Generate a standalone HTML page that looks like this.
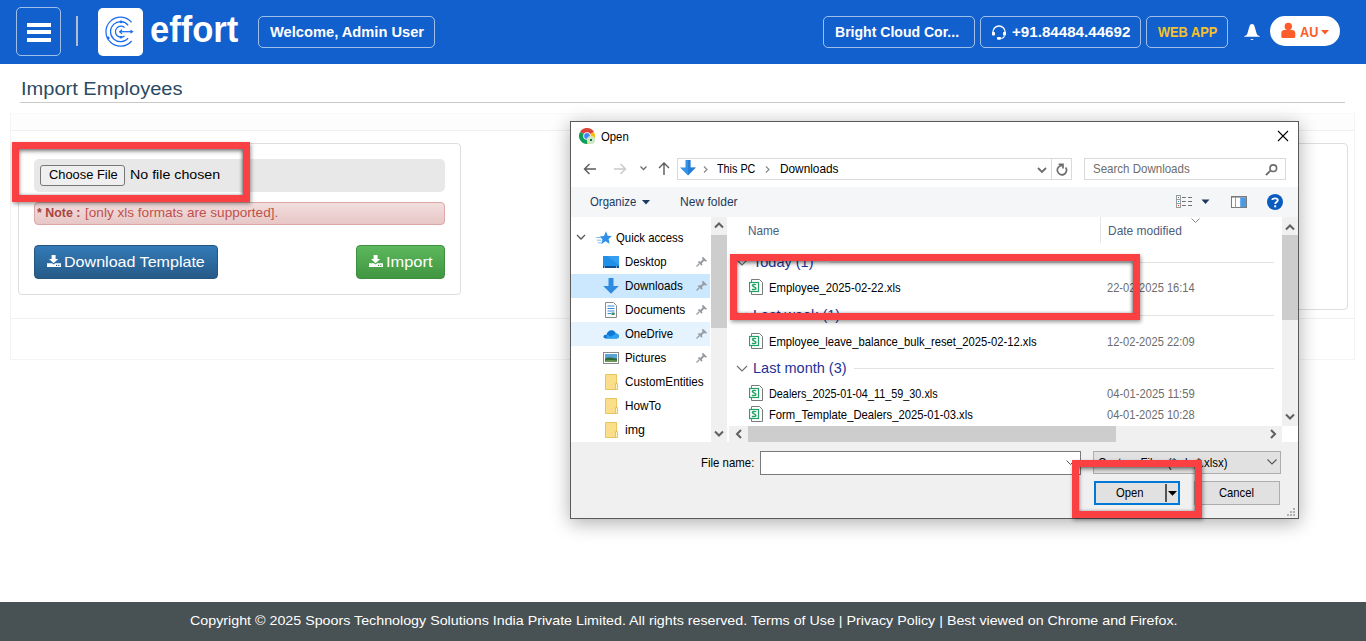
<!DOCTYPE html>
<html><head><meta charset="utf-8">
<style>
*{box-sizing:border-box;margin:0;padding:0}
html,body{width:1366px;height:641px;overflow:hidden;background:#fff;font-family:"Liberation Sans",sans-serif;position:relative}
.a{position:absolute}
.t{position:absolute;white-space:nowrap}
.hb{border:1px solid rgba(255,255,255,.55);border-radius:5px}
</style></head><body>
<div class="a" style="left:0px;top:0px;width:1366px;height:64px;background:#1160cd"></div>
<div class="a" style="left:16px;top:7px;width:45px;height:49px;border:1px solid rgba(255,255,255,.6);border-radius:5px"></div>
<div class="a" style="left:27px;top:23px;width:24px;height:4px;background:#fff"></div>
<div class="a" style="left:27px;top:30px;width:24px;height:4px;background:#fff"></div>
<div class="a" style="left:27px;top:38px;width:24px;height:4px;background:#fff"></div>
<div class="a" style="left:76px;top:16px;width:2px;height:30px;background:#b4bdcc"></div>
<div class="a" style="left:98px;top:8px;width:45px;height:48px;background:#fff;border-radius:5px"></div>
<svg class="a" style="left:98px;top:8px" width="45" height="48" viewBox="0 0 45 48"><g fill="none" stroke="#1a6cf0" stroke-width="1.25">
<path d="M33.6 14.4 A14.5 14.5 0 1 0 33.6 33"/><path d="M30.2 17.3 A10 10 0 1 0 30.2 30.1"/><path d="M26.5 19.5 A5.5 5.5 0 1 0 26.5 27.9"/><path d="M21.5 23.7 H34"/><path d="M24 21.7 L21.8 23.7 L24 25.7"/></g>
<g fill="#1a6cf0"><circle cx="23" cy="13.9" r="1.3"/><circle cx="23" cy="29.2" r="1.3"/><circle cx="10.2" cy="30" r="1.4"/><path d="M32.5 21.6 L35.5 23.7 L32.5 25.8Z"/></g></svg>
<div class="t" style="left:149.70px;top:11.53px;font-size:36px;line-height:36px;color:#fff;font-weight:bold;transform:scaleX(0.9600);transform-origin:0 0;">effort</div>
<div class="a" style="left:258px;top:16px;width:177px;height:32px;border:1px solid rgba(255,255,255,.6);border-radius:5px"></div>
<div class="t" style="left:269.80px;top:24.76px;font-size:14.7px;line-height:14.7px;color:#fff;font-weight:bold;transform:scaleX(0.9987);transform-origin:0 0;">Welcome, Admin User</div>
<div class="a" style="left:823px;top:16px;width:152px;height:32px;border:1px solid rgba(255,255,255,.6);border-radius:5px"></div>
<div class="t" style="left:834.80px;top:24.86px;font-size:14.7px;line-height:14.7px;color:#fff;font-weight:bold;transform:scaleX(0.9565);transform-origin:0 0;">Bright Cloud Cor...</div>
<div class="a" style="left:980px;top:16px;width:161px;height:32px;border:1px solid rgba(255,255,255,.6);border-radius:5px"></div>
<svg class="a" style="left:991px;top:25px" width="16" height="16" viewBox="0 0 16 16"><path d="M1.9 9 V7.1 A6.1 6.1 0 0 1 14.1 7.1 V9" fill="none" stroke="#fff" stroke-width="1.3"/>
<rect x="1" y="7" width="3" height="3.6" rx=".8" fill="#fff"/><rect x="12" y="7" width="3" height="3.6" rx=".8" fill="#fff"/>
<path d="M13.3 10.4 Q13.3 13.3 9.5 13.3" fill="none" stroke="#fff" stroke-width="1.1"/><rect x="6" y="12" width="4" height="2.7" rx="1" fill="#fff"/></svg>
<div class="t" style="left:1011.90px;top:24.86px;font-size:14.7px;line-height:14.7px;color:#fff;font-weight:bold;transform:scaleX(1.0316);transform-origin:0 0;">+91.84484.44692</div>
<div class="a" style="left:1146px;top:16px;width:82px;height:32px;border:1px solid rgba(255,255,255,.6);border-radius:5px"></div>
<div class="t" style="left:1157.80px;top:25.20px;font-size:14.3px;line-height:14.3px;color:#f6c12a;font-weight:bold;transform:scaleX(0.8941);transform-origin:0 0;">WEB APP</div>
<svg class="a" style="left:1243px;top:23px" width="18" height="19" viewBox="0 0 18 19"><path d="M9 1 C7.6 1 7 1.8 6.5 3.2 L4.3 10.8 C3.8 12.2 2.6 12.8 1.2 13.2 V13.8 H16.8 V13.2 C15.4 12.8 14.2 12.2 13.7 10.8 L11.5 3.2 C11 1.8 10.4 1 9 1Z" fill="#fff"/><path d="M7.3 16 Q9 18.2 10.7 16Z" fill="#fff"/></svg>
<div class="a" style="left:1270px;top:16px;width:70px;height:30px;background:#fff;border-radius:15px"></div>
<svg class="a" style="left:1281px;top:22px" width="15" height="16" viewBox="0 0 15 16"><circle cx="7.3" cy="4.5" r="3.7" fill="#fd5c2b"/><path d="M0.3 14.4 V11 C0.3 9 1.8 7.9 3.6 7.9 H11 C12.8 7.9 14.3 9 14.3 11 V14.4 C14.3 15.3 13.8 15.9 12.8 15.9 H1.8 C0.8 15.9 0.3 15.3 0.3 14.4Z" fill="#fd5c2b"/></svg>
<div class="t" style="left:1299.70px;top:25.15px;font-size:14px;line-height:14px;color:#fd5c2b;font-weight:bold;transform:scaleX(0.9052);transform-origin:0 0;">AU</div>
<svg class="a" style="left:1321px;top:30px" width="8" height="5" viewBox="0 0 8 5"><path d="M0 0H8L4 4.5Z" fill="#fd5c2b"/></svg>
<div class="t" style="left:20.50px;top:79.96px;font-size:18px;line-height:18px;color:#2b4a63;font-weight:normal;transform:scaleX(1.1133);transform-origin:0 0;">Import Employees</div>
<div class="a" style="left:20px;top:102px;width:1325px;height:1px;background:#c9c9c9"></div>
<div class="a" style="left:10px;top:113px;width:1345px;height:247px;border:1px solid #f4f4f4;border-top-color:#fafafa"></div>
<div class="a" style="left:11px;top:114px;width:1343px;height:16px;background:#fdfdfd"></div>
<div class="a" style="left:10px;top:130px;width:1345px;height:1px;background:#f0f0f0"></div>
<div class="a" style="left:10px;top:318px;width:1345px;height:1px;background:#f0f0f0"></div>
<div class="a" style="left:18px;top:143px;width:443px;height:152px;border:1px solid #dedede;border-radius:4px"></div>
<div class="a" style="left:34px;top:159px;width:411px;height:33px;background:#e8e8e8;border-radius:5px"></div>
<div class="a" style="left:40px;top:165px;width:85px;height:21px;background:#efefef;border:1px solid #767676;border-radius:3px"></div>
<div class="t" style="left:48.60px;top:168.39px;font-size:13.6px;line-height:13.6px;color:#000;font-weight:normal;transform:scaleX(0.9467);transform-origin:0 0;">Choose File</div>
<div class="t" style="left:129.80px;top:168.29px;font-size:13.6px;line-height:13.6px;color:#000;font-weight:normal;transform:scaleX(1.0466);transform-origin:0 0;">No file chosen</div>
<div class="a" style="left:34px;top:202px;width:411px;height:23px;background:linear-gradient(#f2dede,#e8c6c6);border:1px solid #dca7a7;border-radius:4px"></div>
<div class="t" style="left:37.10px;top:207.42px;font-size:12.5px;line-height:12.5px;color:#a94442;font-weight:bold;transform:scaleX(0.9943);transform-origin:0 0;">* Note :</div>
<div class="t" style="left:84.70px;top:207.16px;font-size:12.8px;line-height:12.8px;color:#c0504d;font-weight:normal;transform:scaleX(1.0613);transform-origin:0 0;">[only xls formats are supported].</div>
<div class="a" style="left:34px;top:245px;width:184px;height:34px;background:linear-gradient(#337ab7,#265a88);border:1px solid #245580;border-radius:4px"></div>
<div class="t" style="left:64.20px;top:254.73px;font-size:14.5px;line-height:14.5px;color:#fff;font-weight:normal;transform:scaleX(1.1079);transform-origin:0 0;">Download Template</div>
<svg class="a" style="left:47px;top:255px" width="14" height="12" viewBox="0 0 14 12"><path d="M4.6 0 H8.6 V4 H11.2 L6.6 8.3 L2 4 H4.6Z" fill="#fff"/><path d="M0 8.2 H5 L6.6 9.6 L8.2 8.2 H14 V12 H0Z" fill="#fff"/><rect x="9" y="9.8" width="1.2" height="1.2" fill="#2b6499"/><rect x="11.2" y="9.8" width="1.2" height="1.2" fill="#2b6499"/></svg>
<div class="a" style="left:356px;top:245px;width:89px;height:34px;background:linear-gradient(#5cb85c,#419641);border:1px solid #3e8f3e;border-radius:4px"></div>
<div class="t" style="left:386.00px;top:254.73px;font-size:14.5px;line-height:14.5px;color:#fff;font-weight:normal;transform:scaleX(1.1316);transform-origin:0 0;">Import</div>
<svg class="a" style="left:369px;top:255px" width="14" height="12" viewBox="0 0 14 12"><path d="M4.6 0 H8.6 V4 H11.2 L6.6 8.3 L2 4 H4.6Z" fill="#fff"/><path d="M0 8.2 H5 L6.6 9.6 L8.2 8.2 H14 V12 H0Z" fill="#fff"/><rect x="9" y="9.8" width="1.2" height="1.2" fill="#4a9e4a"/><rect x="11.2" y="9.8" width="1.2" height="1.2" fill="#4a9e4a"/></svg>
<div class="a" style="left:900px;top:143px;width:448px;height:167px;border:1px solid #dedede;border-radius:4px"></div>
<div class="a" style="left:0px;top:602px;width:1366px;height:39px;background:#485154"></div>
<div class="t" style="left:189.50px;top:613.97px;font-size:13.5px;line-height:13.5px;color:#fff;font-weight:normal;transform:scaleX(1.0563);transform-origin:0 0;">Copyright © 2025 Spoors Technology Solutions India Private Limited. All rights reserved. Terms of Use | Privacy Policy | Best viewed on Chrome and Firefox.</div>
<div class="a" style="left:12px;top:142px;width:238px;height:60px;border:7px solid #fb4044;box-shadow:1px 2px 4px rgba(0,0,0,.4), inset 0 2px 4px rgba(0,0,0,.5), inset -1px 0 3px rgba(0,0,0,.25)"></div>
<div class="a" style="left:570px;top:121px;width:729px;height:398px;background:#f0f0f0;border:1px solid #5a5a5a;box-shadow:0 4px 18px rgba(0,0,0,.32)"></div>
<div class="a" style="left:571px;top:122px;width:727px;height:65px;background:#fff"></div>
<div class="a" style="left:571px;top:187px;width:727px;height:30px;background:#f5f6f7"></div>
<div class="a" style="left:571px;top:217px;width:140px;height:225px;background:#fff"></div>
<div class="a" style="left:711px;top:217px;width:16px;height:225px;background:#f0f0f0"></div>
<div class="a" style="left:727px;top:217px;width:2px;height:225px;background:#fff"></div>
<div class="a" style="left:729px;top:217px;width:553px;height:209px;background:#fff"></div>
<div class="a" style="left:1282px;top:217px;width:16px;height:209px;background:#f0f0f0"></div>
<div class="a" style="left:729px;top:426px;width:553px;height:16px;background:#f0f0f0"></div>
<div class="a" style="left:1282px;top:426px;width:16px;height:16px;background:#fff"></div>
<svg class="a" style="left:579px;top:128px" width="16" height="16" viewBox="0 0 16 16"><path d="M8 8 L1.07 4 A8 8 0 0 1 14.93 4Z" fill="#db4437"/><path d="M8 8 L14.93 4 A8 8 0 0 1 8 16Z" fill="#f4c20d"/><path d="M8 8 L8 16 A8 8 0 0 1 1.07 4Z" fill="#0f9d58"/>
<circle cx="8" cy="8" r="3.8" fill="#fff"/><circle cx="8" cy="8" r="2.9" fill="#4285f4"/>
<circle cx="12" cy="12" r="4.1" fill="#cfe8c8"/><rect x="11" y="11" width="2" height="2" fill="#137333"/></svg>
<div class="t" style="left:600.80px;top:131.02px;font-size:12.5px;line-height:12.5px;color:#000;font-weight:normal;transform:scaleX(0.9060);transform-origin:0 0;">Open</div>
<svg class="a" style="left:1277px;top:130px" width="12" height="12" viewBox="0 0 12 12"><path d="M1 1 L11 11 M11 1 L1 11" stroke="#000" stroke-width="1.1"/></svg>
<svg class="a" style="left:583px;top:162px" width="14" height="14" viewBox="0 0 14 14"><path d="M1.5 7 H13 M6.5 2 L1.5 7 L6.5 12" fill="none" stroke="#5a5a5a" stroke-width="1.4"/></svg>
<svg class="a" style="left:613px;top:162px" width="14" height="14" viewBox="0 0 14 14"><path d="M1 7 H12.5 M7.5 2 L12.5 7 L7.5 12" fill="none" stroke="#c9c9c9" stroke-width="1.4"/></svg>
<svg class="a" style="left:639px;top:165px" width="9" height="7" viewBox="0 0 9 7"><path d="M1.5 1.5 L4.5 4.5 L7.5 1.5" fill="none" stroke="#6d6d6d" stroke-width="1.3"/></svg>
<svg class="a" style="left:657px;top:161px" width="14" height="15" viewBox="0 0 14 15"><path d="M7 14 V2 M2 7 L7 2 L12 7" fill="none" stroke="#5a5a5a" stroke-width="1.4"/></svg>
<div class="a" style="left:677px;top:158px;width:395px;height:22px;background:#fff;border:1px solid #d9d9d9"></div>
<div class="a" style="left:1051px;top:158px;width:1px;height:22px;background:#d9d9d9"></div>
<svg class="a" style="left:680px;top:160px" width="16" height="16" viewBox="0 0 16 16"><path d="M5.5 0 H10.5 V7.5 H16 L8 15.5 L0 7.5 H5.5Z" fill="#3592e6"/><path d="M8 15.5 L15.5 7.5 H10.5 V0 H8Z" fill="#1f72c8" opacity=".6"/></svg>
<svg class="a" style="left:702px;top:165px" width="7" height="9" viewBox="0 0 7 9"><path d="M2 1.5 L5 4.5 L2 7.5" fill="none" stroke="#8a8a8a" stroke-width="1.2"/></svg>
<div class="t" style="left:717.40px;top:162.67px;font-size:12.2px;line-height:12.2px;color:#000;font-weight:normal;transform:scaleX(0.8851);transform-origin:0 0;">This PC</div>
<svg class="a" style="left:764px;top:165px" width="7" height="9" viewBox="0 0 7 9"><path d="M2 1.5 L5 4.5 L2 7.5" fill="none" stroke="#8a8a8a" stroke-width="1.2"/></svg>
<div class="t" style="left:779.50px;top:162.67px;font-size:12.2px;line-height:12.2px;color:#000;font-weight:normal;transform:scaleX(0.9693);transform-origin:0 0;">Downloads</div>
<svg class="a" style="left:1037px;top:167px" width="10" height="7" viewBox="0 0 10 7"><path d="M1 1 L5 5 L9 1" fill="none" stroke="#6d6d6d" stroke-width="1.8"/></svg>
<svg class="a" style="left:1056px;top:162px" width="12" height="14" viewBox="0 0 12 14"><path d="M6 3.6 A4.6 4.6 0 1 0 9.6 5.4" fill="none" stroke="#6d6d6d" stroke-width="1.7"/><path d="M2.6 2.4 H7 V6.6" fill="none" stroke="#6d6d6d" stroke-width="1.7"/></svg>
<div class="a" style="left:1084px;top:158px;width:202px;height:22px;background:#fff;border:1px solid #d9d9d9"></div>
<div class="t" style="left:1093.20px;top:162.67px;font-size:12.2px;line-height:12.2px;color:#6d6d6d;font-weight:normal;transform:scaleX(0.9452);transform-origin:0 0;">Search Downloads</div>
<svg class="a" style="left:1265px;top:163px" width="13" height="13" viewBox="0 0 13 13"><circle cx="8.3" cy="5.2" r="3.3" fill="none" stroke="#6a6a6a" stroke-width="1.6"/><path d="M5.2 7.8 L1 12" stroke="#6a6a6a" stroke-width="1.8"/></svg>
<div class="t" style="left:589.70px;top:196.47px;font-size:12.2px;line-height:12.2px;color:#1e395b;font-weight:normal;transform:scaleX(0.9352);transform-origin:0 0;">Organize</div>
<svg class="a" style="left:642px;top:200px" width="8" height="5" viewBox="0 0 8 5"><path d="M0 0 H8 L4 4.5Z" fill="#1e395b"/></svg>
<div class="t" style="left:680.30px;top:196.47px;font-size:12.2px;line-height:12.2px;color:#1e395b;font-weight:normal;transform:scaleX(0.9894);transform-origin:0 0;">New folder</div>
<svg class="a" style="left:1176px;top:195px" width="17" height="13" viewBox="0 0 17 13"><rect x="0.5" y="0.5" width="4" height="12" fill="#fff" stroke="#9a9a9a"/><path d="M0.5 4.5 H4.5 M0.5 8.5 H4.5" stroke="#9a9a9a"/>
<rect x="2" y="2" width="1" height="1" fill="#2e8b57"/><rect x="2" y="6" width="1" height="1" fill="#3a8ee6"/><rect x="2" y="10" width="1" height="1" fill="#e03030"/>
<path d="M6 2.5 H9.8 M12 2.5 H16 M6 6.5 H9.8 M12 6.5 H16 M6 10.5 H9.8 M12 10.5 H16" stroke="#707070" stroke-width="1"/></svg>
<svg class="a" style="left:1201px;top:199px" width="9" height="6" viewBox="0 0 9 6"><path d="M0.5 0.5 H8.5 L4.5 5Z" fill="#1e395b"/></svg>
<svg class="a" style="left:1231px;top:196px" width="16" height="12" viewBox="0 0 16 12"><rect x="0.5" y="0.5" width="15" height="11" fill="#fff" stroke="#7a7a7a"/><rect x="0" y="0" width="16" height="1.6" fill="#7a7a7a"/><rect x="9.2" y="1.6" width="5.8" height="9.4" fill="#4a9be6"/><path d="M4.5 1 V11.5" stroke="#9a9a9a"/></svg>
<svg class="a" style="left:1266px;top:193px" width="18" height="18" viewBox="0 0 18 18"><circle cx="9" cy="9" r="8" fill="#0b5cc1"/><path d="M6.3 7 C6.3 4.8 11.8 4.8 11.8 7.2 C11.8 9 9.2 9 9.2 11" fill="none" stroke="#fff" stroke-width="1.8"/><rect x="8.2" y="12.3" width="2" height="2" fill="#fff"/></svg>
<div class="a" style="left:571px;top:274px;width:139px;height:24px;background:#cce8ff"></div>
<div class="a" style="left:571px;top:322px;width:139px;height:24px;background:#e5f3ff"></div>
<svg class="a" style="left:576px;top:234px" width="10" height="7" viewBox="0 0 10 7"><path d="M1 1 L5 5 L9 1" fill="none" stroke="#555" stroke-width="1.3"/></svg>
<svg class="a" style="left:596px;top:231px" width="16" height="14" viewBox="0 0 16 14"><path d="M10 0.3 L11.7 4.8 L15.8 5 L12.6 7.9 L13.6 12.8 L9.4 10.2 L5.2 13.2 L6.5 8.4 L3.6 5.4 L8 5.1Z" fill="#2f8fe6"/>
<path d="M0.3 6.5 H4.5 M0.8 9.2 H5.3 M1.8 11.8 H5" stroke="#7bbcf2" stroke-width="1"/></svg>
<div class="t" style="left:616.20px;top:232.07px;font-size:12.2px;line-height:12.2px;color:#000;font-weight:normal;transform:scaleX(0.9305);transform-origin:0 0;">Quick access</div>
<svg class="a" style="left:603px;top:256px" width="16" height="12" viewBox="0 0 16 12"><rect x="0" y="0" width="16" height="12" fill="#1f8fe8"/><path d="M0 0 H16 V9 L4 0Z" fill="#46a9f5" opacity=".6"/><rect x="0" y="10" width="16" height="2" fill="#0b4f94"/><rect x="1" y="10.5" width="1" height="1" fill="#fff"/><rect x="13" y="10.5" width="1" height="1" fill="#fff"/></svg>
<div class="t" style="left:624.70px;top:256.07px;font-size:12.2px;line-height:12.2px;color:#000;font-weight:normal;transform:scaleX(0.9296);transform-origin:0 0;">Desktop</div>
<svg class="a" style="left:696px;top:256px" width="12" height="11" viewBox="0 0 12 11"><path d="M7 0.8 L11.2 5 L9.8 5.6 L8 5 L6 7 L6.4 9 L5.6 9.8 L1.8 6 L2.6 5.2 L4.6 5.6 L6.6 3.6 L6 1.8Z" fill="#979ca1"/><path d="M3.5 7.5 L0.5 10.5" stroke="#979ca1" stroke-width="1.3"/></svg>
<svg class="a" style="left:603px;top:278px" width="16" height="16" viewBox="0 0 16 16"><path d="M5.5 0 H10.5 V8 H15.8 L8 15.8 L0.2 8 H5.5Z" fill="#2e8be0"/></svg>
<div class="t" style="left:624.70px;top:280.07px;font-size:12.2px;line-height:12.2px;color:#000;font-weight:normal;transform:scaleX(0.9593);transform-origin:0 0;">Downloads</div>
<svg class="a" style="left:696px;top:280px" width="12" height="11" viewBox="0 0 12 11"><path d="M7 0.8 L11.2 5 L9.8 5.6 L8 5 L6 7 L6.4 9 L5.6 9.8 L1.8 6 L2.6 5.2 L4.6 5.6 L6.6 3.6 L6 1.8Z" fill="#979ca1"/><path d="M3.5 7.5 L0.5 10.5" stroke="#979ca1" stroke-width="1.3"/></svg>
<svg class="a" style="left:605px;top:302px" width="12" height="16" viewBox="0 0 12 16"><path d="M0.5 0.5 H8.5 L11.5 3.5 V15.5 H0.5Z" fill="#fff" stroke="#8a8a8a"/><path d="M2.5 4 H9.5 M2.5 6.5 H9.5 M2.5 9 H9.5 M2.5 11.5 H6 M7 11.5 H9.5" stroke="#3a88d8" stroke-width="1"/><rect x="6.5" y="10.5" width="3" height="2.5" fill="#3c8a5a"/></svg>
<div class="t" style="left:624.70px;top:304.07px;font-size:12.2px;line-height:12.2px;color:#000;font-weight:normal;transform:scaleX(0.9772);transform-origin:0 0;">Documents</div>
<svg class="a" style="left:696px;top:304px" width="12" height="11" viewBox="0 0 12 11"><path d="M7 0.8 L11.2 5 L9.8 5.6 L8 5 L6 7 L6.4 9 L5.6 9.8 L1.8 6 L2.6 5.2 L4.6 5.6 L6.6 3.6 L6 1.8Z" fill="#979ca1"/><path d="M3.5 7.5 L0.5 10.5" stroke="#979ca1" stroke-width="1.3"/></svg>
<svg class="a" style="left:603px;top:328px" width="16" height="11" viewBox="0 0 16 11"><path d="M2.5 10.5 C0.5 10.5 0 8.8 0.8 7.6 C1.5 6.6 3 6.6 3.6 6.8 C4.2 3 7.5 1.6 10 2.6 C11.8 3.3 12.6 4.6 12.8 5.6 C14.8 5.6 16 7 16 8.3 C16 9.8 14.8 10.5 13.5 10.5Z" fill="#0f78d4"/><path d="M3.6 6.8 C5.5 7.2 6.5 8 7.5 8.8 L12.8 5.6 C14.8 5.6 16 7 16 8.3 C16 9.8 14.8 10.5 13.5 10.5 H4Z" fill="#2da0f0"/></svg>
<div class="t" style="left:624.70px;top:328.07px;font-size:12.2px;line-height:12.2px;color:#000;font-weight:normal;transform:scaleX(0.9353);transform-origin:0 0;">OneDrive</div>
<svg class="a" style="left:696px;top:328px" width="12" height="11" viewBox="0 0 12 11"><path d="M7 0.8 L11.2 5 L9.8 5.6 L8 5 L6 7 L6.4 9 L5.6 9.8 L1.8 6 L2.6 5.2 L4.6 5.6 L6.6 3.6 L6 1.8Z" fill="#979ca1"/><path d="M3.5 7.5 L0.5 10.5" stroke="#979ca1" stroke-width="1.3"/></svg>
<svg class="a" style="left:603px;top:352px" width="16" height="12" viewBox="0 0 16 12"><rect x="0.5" y="0.5" width="15" height="11" fill="#fff" stroke="#8a8a8a"/><rect x="2" y="2" width="12" height="8" fill="#5ba4d8"/><path d="M2 7 C5 4.5 8 6 14 6.5 V10 H2Z" fill="#2f6a3a"/><path d="M2 8.5 C6 7.5 9 8 14 8.5 V10 H2Z" fill="#6c9c58"/></svg>
<div class="t" style="left:624.70px;top:352.07px;font-size:12.2px;line-height:12.2px;color:#000;font-weight:normal;transform:scaleX(0.9372);transform-origin:0 0;">Pictures</div>
<svg class="a" style="left:696px;top:352px" width="12" height="11" viewBox="0 0 12 11"><path d="M7 0.8 L11.2 5 L9.8 5.6 L8 5 L6 7 L6.4 9 L5.6 9.8 L1.8 6 L2.6 5.2 L4.6 5.6 L6.6 3.6 L6 1.8Z" fill="#979ca1"/><path d="M3.5 7.5 L0.5 10.5" stroke="#979ca1" stroke-width="1.3"/></svg>
<svg class="a" style="left:605px;top:374px" width="14" height="16" viewBox="0 0 14 16"><path d="M0.5 0.5 H11.5 V15.5 H0.5Z" fill="#fcde8a" stroke="#e8c45c"/><path d="M10.5 9.5 H12.5 V15.5 H10.5Z" fill="#fff3c4" stroke="#e8c45c"/></svg>
<div class="t" style="left:624.70px;top:376.27px;font-size:12.2px;line-height:12.2px;color:#000;font-weight:normal;transform:scaleX(0.9604);transform-origin:0 0;">CustomEntities</div>
<svg class="a" style="left:605px;top:398px" width="14" height="16" viewBox="0 0 14 16"><path d="M0.5 0.5 H11.5 V15.5 H0.5Z" fill="#fcde8a" stroke="#e8c45c"/><path d="M10.5 9.5 H12.5 V15.5 H10.5Z" fill="#fff3c4" stroke="#e8c45c"/></svg>
<div class="t" style="left:624.70px;top:400.17px;font-size:12.2px;line-height:12.2px;color:#000;font-weight:normal;transform:scaleX(0.9653);transform-origin:0 0;">HowTo</div>
<svg class="a" style="left:605px;top:422px" width="14" height="16" viewBox="0 0 14 16"><path d="M0.5 0.5 H11.5 V15.5 H0.5Z" fill="#fcde8a" stroke="#e8c45c"/><path d="M10.5 9.5 H12.5 V15.5 H10.5Z" fill="#fff3c4" stroke="#e8c45c"/></svg>
<div class="t" style="left:624.70px;top:424.17px;font-size:12.2px;line-height:12.2px;color:#000;font-weight:normal;transform:scaleX(1.0176);transform-origin:0 0;">img</div>
<div class="a" style="left:711px;top:235px;width:16px;height:93px;background:#cdcdcd"></div>
<svg class="a" style="left:714px;top:222px" width="10" height="7" viewBox="0 0 10 7"><path d="M1 5.5 L5 1.5 L9 5.5" fill="none" stroke="#606060" stroke-width="2"/></svg>
<svg class="a" style="left:714px;top:430px" width="10" height="7" viewBox="0 0 10 7"><path d="M1 1.5 L5 5.5 L9 1.5" fill="none" stroke="#606060" stroke-width="2"/></svg>
<div class="t" style="left:748.30px;top:225.17px;font-size:12.2px;line-height:12.2px;color:#4c607a;font-weight:normal;transform:scaleX(0.9647);transform-origin:0 0;">Name</div>
<div class="a" style="left:1100px;top:217px;width:1px;height:26px;background:#e5e5e5"></div>
<div class="t" style="left:1107.50px;top:225.07px;font-size:12.2px;line-height:12.2px;color:#4c607a;font-weight:normal;transform:scaleX(0.9817);transform-origin:0 0;">Date modified</div>
<svg class="a" style="left:1191px;top:218px" width="9" height="5" viewBox="0 0 9 5"><path d="M0.5 0.5 L4.5 4.5 L8.5 0.5" fill="none" stroke="#8a8a8a" stroke-width="1"/></svg>
<svg class="a" style="left:736px;top:258.5px" width="12" height="8" viewBox="0 0 12 8"><path d="M1 1 L6 6 L11 1" fill="none" stroke="#6d6d6d" stroke-width="1.1"/></svg>
<div class="t" style="left:752.80px;top:253.80px;font-size:15px;line-height:15px;color:#1e3296;font-weight:normal;transform:scaleX(0.9679);transform-origin:0 0;">Today (1)</div>
<div class="a" style="left:830px;top:262px;width:444px;height:1px;background:#e2e2e2"></div>
<svg class="a" style="left:736px;top:311.5px" width="12" height="8" viewBox="0 0 12 8"><path d="M1 1 L6 6 L11 1" fill="none" stroke="#6d6d6d" stroke-width="1.1"/></svg>
<div class="t" style="left:752.80px;top:306.80px;font-size:15px;line-height:15px;color:#1e3296;font-weight:normal;transform:scaleX(0.9679);transform-origin:0 0;">Last week (1)</div>
<div class="a" style="left:858px;top:315px;width:416px;height:1px;background:#e2e2e2"></div>
<svg class="a" style="left:736px;top:364.8px" width="12" height="8" viewBox="0 0 12 8"><path d="M1 1 L6 6 L11 1" fill="none" stroke="#6d6d6d" stroke-width="1.1"/></svg>
<div class="t" style="left:752.80px;top:360.10px;font-size:15px;line-height:15px;color:#1e3296;font-weight:normal;transform:scaleX(0.9679);transform-origin:0 0;">Last month (3)</div>
<div class="a" style="left:854px;top:368px;width:420px;height:1px;background:#e2e2e2"></div>
<svg class="a" style="left:749px;top:279px" width="14" height="16" viewBox="0 0 14 16"><path d="M2.5 0.5 H10.5 L13.5 3.5 V15.5 H2.5Z" fill="#fff" stroke="#7a7a7a"/><rect x="0.5" y="3.5" width="9" height="9" fill="#fff" stroke="#21a366" stroke-width="1.2"/><path d="M6.9 6 C6.4 5.1 3.4 5.1 3.4 6.6 C3.4 8 6.9 7.8 6.9 9.4 C6.9 10.9 3.7 10.9 3.1 10" fill="none" stroke="#21a366" stroke-width="1.5"/></svg>
<div class="t" style="left:769.00px;top:282.47px;font-size:12.2px;line-height:12.2px;color:#000;font-weight:normal;transform:scaleX(0.9299);transform-origin:0 0;">Employee_2025-02-22.xls</div>
<div class="t" style="left:1107.20px;top:282.47px;font-size:12.2px;line-height:12.2px;color:#6d6d6d;font-weight:normal;transform:scaleX(0.9114);transform-origin:0 0;">22-02-2025 16:14</div>
<svg class="a" style="left:749px;top:333px" width="14" height="16" viewBox="0 0 14 16"><path d="M2.5 0.5 H10.5 L13.5 3.5 V15.5 H2.5Z" fill="#fff" stroke="#7a7a7a"/><rect x="0.5" y="3.5" width="9" height="9" fill="#fff" stroke="#21a366" stroke-width="1.2"/><path d="M6.9 6 C6.4 5.1 3.4 5.1 3.4 6.6 C3.4 8 6.9 7.8 6.9 9.4 C6.9 10.9 3.7 10.9 3.1 10" fill="none" stroke="#21a366" stroke-width="1.5"/></svg>
<div class="t" style="left:769.00px;top:335.67px;font-size:12.2px;line-height:12.2px;color:#000;font-weight:normal;transform:scaleX(0.9225);transform-origin:0 0;">Employee_leave_balance_bulk_reset_2025-02-12.xls</div>
<div class="t" style="left:1107.20px;top:335.67px;font-size:12.2px;line-height:12.2px;color:#6d6d6d;font-weight:normal;transform:scaleX(0.9114);transform-origin:0 0;">12-02-2025 22:09</div>
<svg class="a" style="left:749px;top:385px" width="14" height="16" viewBox="0 0 14 16"><path d="M2.5 0.5 H10.5 L13.5 3.5 V15.5 H2.5Z" fill="#fff" stroke="#7a7a7a"/><rect x="0.5" y="3.5" width="9" height="9" fill="#fff" stroke="#21a366" stroke-width="1.2"/><path d="M6.9 6 C6.4 5.1 3.4 5.1 3.4 6.6 C3.4 8 6.9 7.8 6.9 9.4 C6.9 10.9 3.7 10.9 3.1 10" fill="none" stroke="#21a366" stroke-width="1.5"/></svg>
<div class="t" style="left:769.00px;top:388.27px;font-size:12.2px;line-height:12.2px;color:#000;font-weight:normal;transform:scaleX(0.8899);transform-origin:0 0;">Dealers_2025-01-04_11_59_30.xls</div>
<div class="t" style="left:1107.20px;top:388.27px;font-size:12.2px;line-height:12.2px;color:#6d6d6d;font-weight:normal;transform:scaleX(0.9202);transform-origin:0 0;">04-01-2025 11:59</div>
<svg class="a" style="left:749px;top:406px" width="14" height="16" viewBox="0 0 14 16"><path d="M2.5 0.5 H10.5 L13.5 3.5 V15.5 H2.5Z" fill="#fff" stroke="#7a7a7a"/><rect x="0.5" y="3.5" width="9" height="9" fill="#fff" stroke="#21a366" stroke-width="1.2"/><path d="M6.9 6 C6.4 5.1 3.4 5.1 3.4 6.6 C3.4 8 6.9 7.8 6.9 9.4 C6.9 10.9 3.7 10.9 3.1 10" fill="none" stroke="#21a366" stroke-width="1.5"/></svg>
<div class="t" style="left:769.00px;top:409.17px;font-size:12.2px;line-height:12.2px;color:#000;font-weight:normal;transform:scaleX(0.9228);transform-origin:0 0;">Form_Template_Dealers_2025-01-03.xls</div>
<div class="t" style="left:1107.20px;top:409.17px;font-size:12.2px;line-height:12.2px;color:#6d6d6d;font-weight:normal;transform:scaleX(0.9114);transform-origin:0 0;">04-01-2025 10:28</div>
<div class="a" style="left:1282px;top:235px;width:16px;height:85px;background:#cdcdcd"></div>
<svg class="a" style="left:1285px;top:224px" width="10" height="7" viewBox="0 0 10 7"><path d="M1 5.5 L5 1.5 L9 5.5" fill="none" stroke="#606060" stroke-width="2"/></svg>
<svg class="a" style="left:1285px;top:413px" width="10" height="7" viewBox="0 0 10 7"><path d="M1 1.5 L5 5.5 L9 1.5" fill="none" stroke="#606060" stroke-width="2"/></svg>
<div class="a" style="left:748px;top:426px;width:368px;height:16px;background:#cdcdcd"></div>
<svg class="a" style="left:735px;top:429px" width="8" height="10" viewBox="0 0 8 10"><path d="M6 1 L2 5 L6 9" fill="none" stroke="#606060" stroke-width="2"/></svg>
<svg class="a" style="left:1269px;top:429px" width="8" height="10" viewBox="0 0 8 10"><path d="M2 1 L6 5 L2 9" fill="none" stroke="#606060" stroke-width="2"/></svg>
<div class="t" style="left:701.30px;top:456.67px;font-size:12.2px;line-height:12.2px;color:#000;font-weight:normal;transform:scaleX(0.9377);transform-origin:0 0;">File name:</div>
<div class="a" style="left:760px;top:451px;width:321px;height:24px;background:#fff;border:1px solid #7a7a7a"></div>
<svg class="a" style="left:1066px;top:460px" width="9" height="6" viewBox="0 0 9 6"><path d="M0.5 0.5 L4.5 4.5 L8.5 0.5" fill="none" stroke="#555" stroke-width="1"/></svg>
<div class="a" style="left:1093px;top:451px;width:188px;height:23px;background:#e1e1e1;border:1px solid #adadad"></div>
<div class="t" style="left:1098.00px;top:456.67px;font-size:12.2px;line-height:12.2px;color:#000;font-weight:normal;transform:scaleX(0.9379);transform-origin:0 0;">Custom Files (*.xls;*.xlsx)</div>
<svg class="a" style="left:1267px;top:459px" width="10" height="6" viewBox="0 0 10 6"><path d="M0.5 0.5 L5 5 L9.5 0.5" fill="none" stroke="#555" stroke-width="1.1"/></svg>
<div class="a" style="left:1094px;top:481px;width:86px;height:24px;background:#e1e1e1;border:2px solid #0078d7"></div>
<div class="a" style="left:1165px;top:484px;width:2px;height:18px;background:#555"></div>
<svg class="a" style="left:1168px;top:491px" width="9" height="5" viewBox="0 0 9 5"><path d="M0 0 H9 L4.5 4.8Z" fill="#000"/></svg>
<div class="t" style="left:1115.70px;top:486.67px;font-size:12.2px;line-height:12.2px;color:#000;font-weight:normal;transform:scaleX(0.9215);transform-origin:0 0;">Open</div>
<div class="a" style="left:1194px;top:481px;width:86px;height:24px;background:#e1e1e1;border:1px solid #adadad"></div>
<div class="t" style="left:1219.40px;top:486.67px;font-size:12.2px;line-height:12.2px;color:#000;font-weight:normal;transform:scaleX(0.9216);transform-origin:0 0;">Cancel</div>
<svg class="a" style="left:1286px;top:507px" width="10" height="10" viewBox="0 0 10 10"><g fill="#b0b0b0"><rect x="7" y="1" width="2" height="2"/><rect x="4" y="4" width="2" height="2"/><rect x="7" y="4" width="2" height="2"/><rect x="1" y="7" width="2" height="2"/><rect x="4" y="7" width="2" height="2"/><rect x="7" y="7" width="2" height="2"/></g></svg>
<div class="a" style="left:730px;top:254px;width:410px;height:66px;border:7px solid #fb4044;box-shadow:1px 2px 4px rgba(0,0,0,.4), inset 0 2px 4px rgba(0,0,0,.5), inset -1px 0 3px rgba(0,0,0,.25)"></div>
<div class="a" style="left:1072px;top:460px;width:130px;height:58px;border:7px solid #fb4044;box-shadow:1px 2px 4px rgba(0,0,0,.4), inset 0 2px 4px rgba(0,0,0,.5), inset -1px 0 3px rgba(0,0,0,.25)"></div>
</body></html>
